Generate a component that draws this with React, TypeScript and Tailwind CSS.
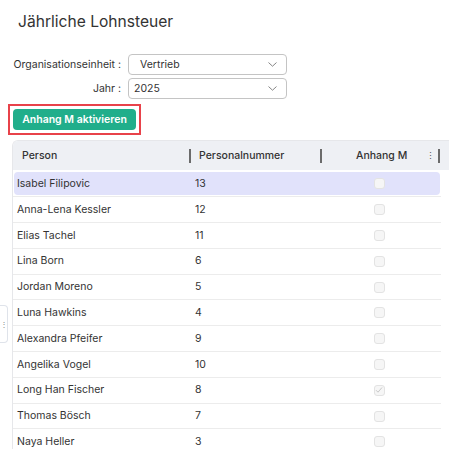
import React from "react";

const rows: [string, string, boolean][] = [
  ["Isabel Filipovic", "13", false],
  ["Anna-Lena Kessler", "12", false],
  ["Elias Tachel", "11", false],
  ["Lina Born", "6", false],
  ["Jordan Moreno", "5", false],
  ["Luna Hawkins", "4", false],
  ["Alexandra Pfeifer", "9", false],
  ["Angelika Vogel", "10", false],
  ["Long Han Fischer", "8", true],
  ["Thomas Bösch", "7", false],
  ["Naya Heller", "3", false],
];

function Chevron() {
  return (
    <svg width="9" height="5" viewBox="0 0 9 5" fill="none" stroke="#777" strokeWidth="0.9" strokeLinecap="round" strokeLinejoin="round">
      <path d="M0.8 0.8l3.7 3.4 3.7-3.4" />
    </svg>
  );
}

export default function App() {
  return (
    <div className="relative w-[449px] h-[449px] overflow-hidden bg-white text-[#333]" style={{ fontFamily: "Inter, 'Noto Sans', sans-serif" }}>
      <div className="pl-[18px] mt-[12px] text-[15.6px] leading-[20px] text-[#333] whitespace-nowrap">Jährliche Lohnsteuer</div>

      <div className="mt-[22px] flex flex-col gap-[3px]">
        <div className="flex items-center">
          <div className="w-[121px] text-right text-[10.5px] whitespace-nowrap">Organisationseinheit :</div>
          <div className="ml-[7px] w-[159px] h-[21px] border border-[#c4c4c4] rounded-[4px] flex items-center justify-between pl-[11px] pr-[9px] text-[10.5px]">
            <span>Vertrieb</span>
            <Chevron />
          </div>
        </div>
        <div className="flex items-center">
          <div className="w-[121px] text-right text-[10.5px] whitespace-nowrap">Jahr :</div>
          <div className="ml-[7px] w-[159px] h-[21px] border border-[#c4c4c4] rounded-[4px] flex items-center justify-between pl-[5px] pr-[9px] text-[10.5px]">
            <span>2025</span>
            <Chevron />
          </div>
        </div>
      </div>

      <div className="ml-[8px] mt-[5px] w-[133px] h-[31px] border-2 border-[#e8424a] flex items-center justify-center">
        <div className="w-[123px] h-[21px] rounded-[4px] bg-[#20ae8b] text-white text-[10.5px] font-semibold flex items-center justify-center whitespace-nowrap">
          Anhang M aktivieren
        </div>
      </div>

      <div className="ml-[12px] mt-[5px] w-[460px] border-l border-t border-[#e6e7ea] rounded-tl-[6px] overflow-hidden">
        <div className="h-[29px] bg-[#eef0f4] flex items-center text-[10.5px] font-medium">
          <div className="w-[176px] pl-[9px] flex items-center">Person</div>
          <div className="w-[2px] h-[14px] bg-[#6b6b6b]" />
          <div className="w-[129px] pl-[8px]">Personalnummer</div>
          <div className="w-[2px] h-[14px] bg-[#6b6b6b]" />
          <div className="w-[116px] flex items-center justify-between">
            <span className="pl-[34px]">Anhang M</span>
            <span className="text-[9px] leading-none text-[#555] pr-[3px]">⋮</span>
          </div>
          <div className="w-[2px] h-[14px] bg-[#6b6b6b]" />
        </div>
        <div className="w-[428px] pt-[1.5px]">
          {rows.map(([name, num, checked], i) => (
            <div key={name} className="h-[25.8px] border-b border-[#ececec] flex items-center">
              <div className={"flex-1 h-[23px] mx-[1px] flex items-center rounded-[4px] text-[10.5px] " + (i === 0 ? "bg-[#e1e2fb]" : "")}>
                <div className="w-[181px] pl-[3px]">{name}</div>
                <div className="w-[125px]">{num}</div>
                <div className="w-[118px] flex justify-center">
                  <div className="w-[11px] h-[11px] rounded-[3px] border border-[#e3e3e3] bg-[#f6f6f6] flex items-center justify-center">
                    {checked && (
                      <svg width="8" height="8" viewBox="0 0 8 8" fill="none" stroke="#c8c8c8" strokeWidth="1">
                        <path d="M1 4.2l2 2L7 1.5" />
                      </svg>
                    )}
                  </div>
                </div>
              </div>
            </div>
          ))}
        </div>
      </div>

      <div className="absolute left-0 top-[305px] w-[8px] h-[38px] border border-l-0 border-[#dfe3ea] rounded-r-[4px] bg-white flex items-center justify-center">
        <span className="text-[8px] leading-none text-[#888]">⋮</span>
      </div>
    </div>
  );
}
